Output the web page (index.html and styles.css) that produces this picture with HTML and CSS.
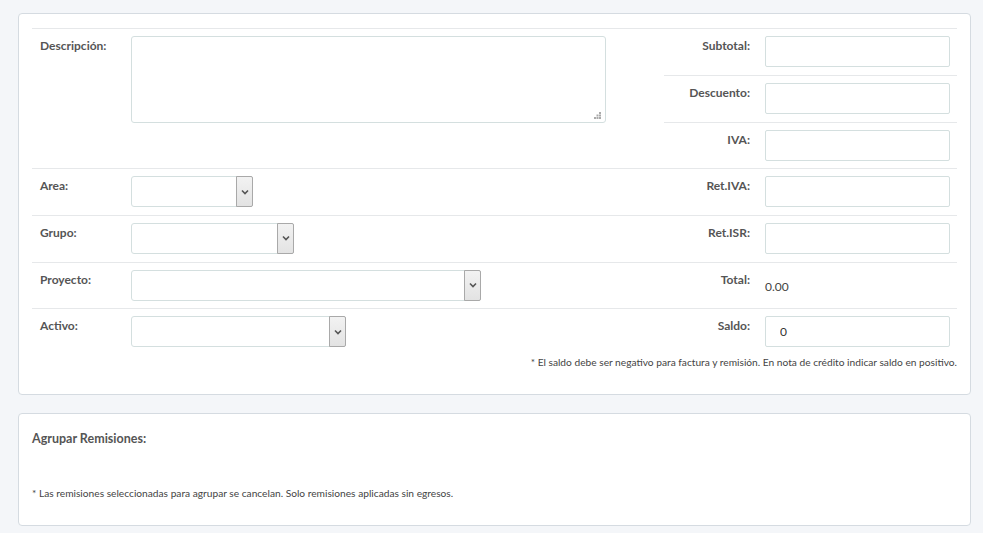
FILE: index.html
```html
<!DOCTYPE html>
<html lang="es">
<head>
  <meta charset="UTF-8">
  <meta name="viewport" content="width=device-width, initial-scale=1.0">
  <title>Egreso</title>
  <link rel="stylesheet" href="styles.css">
</head>
<body>
  <div class="card">
    <div class="form-grid">
      <div class="row top">
        <div class="left">
          <label class="lbl">Descripción:</label>
          <div class="area-wrap">
            <textarea class="txt"></textarea>
            <svg class="grip" width="7" height="7" viewBox="0 0 7 7">
              <rect x="5" y="0" width="2" height="2" fill="#aaa"/>
              <rect x="2.5" y="2.5" width="2" height="2" fill="#aaa"/>
              <rect x="5" y="2.5" width="2" height="2" fill="#aaa"/>
              <rect x="0" y="5" width="2" height="2" fill="#aaa"/>
              <rect x="2.5" y="5" width="2" height="2" fill="#aaa"/>
              <rect x="5" y="5" width="2" height="2" fill="#aaa"/>
            </svg>
          </div>
        </div>
        <div class="right stack">
          <div class="sub">
            <label class="rlbl">Subtotal:</label>
            <input class="inp" type="text">
          </div>
          <div class="sub">
            <label class="rlbl">Descuento:</label>
            <input class="inp" type="text">
          </div>
          <div class="sub">
            <label class="rlbl">IVA:</label>
            <input class="inp" type="text">
          </div>
        </div>
      </div>

      <div class="row">
        <div class="left">
          <label class="lbl">Area:</label>
          <div class="sel w-area"><span class="sel-btn"><svg width="8" height="6" viewBox="0 0 8 6"><path d="M1 1.5 L4 4.5 L7 1.5" fill="none" stroke="#555" stroke-width="1.6"/></svg></span></div>
        </div>
        <div class="right sub">
          <label class="rlbl">Ret.IVA:</label>
          <input class="inp" type="text">
        </div>
      </div>

      <div class="row">
        <div class="left">
          <label class="lbl">Grupo:</label>
          <div class="sel w-grupo"><span class="sel-btn"><svg width="8" height="6" viewBox="0 0 8 6"><path d="M1 1.5 L4 4.5 L7 1.5" fill="none" stroke="#555" stroke-width="1.6"/></svg></span></div>
        </div>
        <div class="right sub">
          <label class="rlbl">Ret.ISR:</label>
          <input class="inp" type="text">
        </div>
      </div>

      <div class="row">
        <div class="left">
          <label class="lbl">Proyecto:</label>
          <div class="sel w-proyecto"><span class="sel-btn"><svg width="8" height="6" viewBox="0 0 8 6"><path d="M1 1.5 L4 4.5 L7 1.5" fill="none" stroke="#555" stroke-width="1.6"/></svg></span></div>
        </div>
        <div class="right sub">
          <label class="rlbl">Total:</label>
          <span class="static">0.00</span>
        </div>
      </div>

      <div class="row">
        <div class="left">
          <label class="lbl">Activo:</label>
          <div class="sel w-activo"><span class="sel-btn"><svg width="8" height="6" viewBox="0 0 8 6"><path d="M1 1.5 L4 4.5 L7 1.5" fill="none" stroke="#555" stroke-width="1.6"/></svg></span></div>
        </div>
        <div class="right sub">
          <label class="rlbl">Saldo:</label>
          <input class="inp saldo" type="text" value="0">
        </div>
      </div>
    </div>
    <p class="note right-note">* El saldo debe ser negativo para factura y remisión. En nota de crédito indicar saldo en positivo.</p>
  </div>

  <div class="card card-agrupar">
    <h4 class="section-title">Agrupar Remisiones:</h4>
    <p class="note">* Las remisiones seleccionadas para agrupar se cancelan. Solo remisiones aplicadas sin egresos.</p>
  </div>
</body>
</html>
```

FILE: styles.css
```css
* {
  margin: 0;
  padding: 0;
  box-sizing: border-box;
}

body {
  font-family: 'Lato', 'Liberation Sans', sans-serif;
  font-size: 12px;
  color: #333;
  background: #f4f6f9;
  padding: 13px 12px 0 18px;
}

.card {
  background: #fff;
  border: 1px solid #d5dbe1;
  border-radius: 4px;
  padding: 14px 13px 0 13px;
  margin-bottom: 18px;
}

.row {
  display: flex;
  height: 46.7px;
  border-top: 1px solid #e6e8ea;
}

.row.top {
  height: auto;
}

.left {
  flex: 0 0 632px;
  display: flex;
  padding: 7px 0 0 8px;
}

.right {
  flex: 1;
}

.stack .sub + .sub {
  border-top: 1px solid #e6e8ea;
}

.sub {
  display: flex;
  height: 46.4px;
  padding-top: 7px;
}

.row .right.sub {
  height: auto;
}

.lbl {
  width: 91px;
  font-weight: bold;
  color: #555;
  padding-top: 2px;
}

.rlbl {
  width: 86px;
  text-align: right;
  font-weight: bold;
  color: #555;
  padding-top: 2px;
}

.inp {
  width: 185px;
  height: 31px;
  margin-left: 15px;
  border: 1px solid #d4dfdf;
  border-radius: 2px;
  font-family: inherit;
  font-size: 12px;
  color: #333;
  padding: 0 14px;
  outline: none;
}

.static {
  margin-left: 15px;
  padding-top: 9px;
  font-size: 12px;
  color: #444;
}

.area-wrap {
  position: relative;
  width: 475px;
  height: 87px;
}

.txt {
  width: 100%;
  height: 100%;
  border: 1px solid #d4dfdf;
  border-radius: 3px;
  resize: none;
  outline: none;
}

.grip {
  position: absolute;
  right: 5px;
  bottom: 4px;
}

.sel {
  height: 31px;
  display: flex;
  justify-content: flex-end;
  border: 1px solid #d4dfdf;
  border-radius: 3px;
  background: #fff;
}

.sel-btn {
  width: 17px;
  margin: -1px -1px -1px 0;
  border: 1px solid #a9a9a9;
  border-radius: 0 2px 2px 0;
  background: linear-gradient(#f2f2f2, #e3e3e3);
  display: flex;
  align-items: center;
  justify-content: center;
}

.w-area { width: 122px; }
.w-grupo { width: 163px; }
.w-proyecto { width: 350px; }
.w-activo { width: 215px; }

.note {
  font-size: 10.2px;
  color: #444;
}

.right-note {
  text-align: right;
  padding: 1px 0 26px;
}

.card-agrupar {
  height: 113px;
  padding-top: 17px;
}

.section-title {
  font-size: 12.5px;
  font-weight: bold;
  color: #555;
  margin-bottom: 41px;
}
```
